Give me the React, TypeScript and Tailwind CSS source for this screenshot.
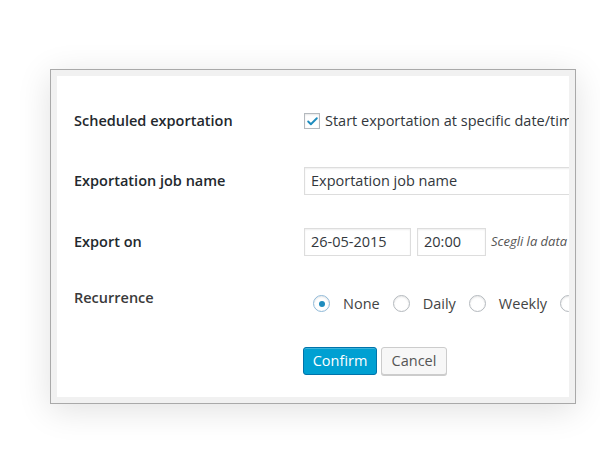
import { Check } from "lucide-react";

const font = { fontFamily: '"Open Sans", "Noto Sans", Arial, sans-serif' };

function Radio({ checked, label }: { checked?: boolean; label: string }) {
  return (
    <label className="flex items-center shrink-0">
      <span
        className={`w-[17px] h-[17px] rounded-full border bg-white flex items-center justify-center shadow-[inset_0_1px_2px_rgba(0,0,0,0.1)] ${
          checked ? "border-[#8fb9d8]" : "border-[#b4b9be]"
        }`}
      >
        {checked && <span className="w-[6px] h-[6px] rounded-full bg-[#1e8cbe]" />}
      </span>
      <span className="ml-[13px] mr-[13px] text-[14.5px] text-[#444]">{label}</span>
    </label>
  );
}

function Row({ label, children }: { label: string; children: React.ReactNode }) {
  return (
    <div className="flex items-center h-7">
      <div className="w-[230px] shrink-0 text-[14.5px] font-semibold text-[#23282d]">{label}</div>
      <div className="flex items-center flex-1 min-w-0 whitespace-nowrap">{children}</div>
    </div>
  );
}

export default function App() {
  return (
    <div className="w-[600px] h-[471px] bg-white overflow-hidden" style={font}>
      <div className="ml-[50px] mt-[69px] w-[526px] h-[335px] border border-[#a9a9a9] bg-[#f1f1f1] p-[6px] shadow-[0_6px_32px_rgba(0,0,0,0.12)]">
        <div className="w-full h-full bg-white overflow-hidden pl-[17px] pt-[31px]">
          <Row label="Scheduled exportation">
            <span className="w-4 h-4 border border-[#b4b9be] bg-white flex items-center justify-center shadow-[inset_0_1px_2px_rgba(0,0,0,0.1)] shrink-0">
              <Check size={13} strokeWidth={3.5} className="text-[#1e8cbe]" />
            </span>
            <span className="ml-[5px] text-[14.5px] text-[#32373c]">Start exportation at specific date/time</span>
          </Row>

          <div className="mt-[32px]">
            <Row label="Exportation job name">
              <div className="h-7 w-[300px] shrink-0 border border-[#ddd] shadow-[inset_0_1px_2px_rgba(0,0,0,0.07)] px-[6px] flex items-center text-[14.5px] text-[#32373c]">
                Exportation job name
              </div>
            </Row>
          </div>

          <div className="mt-[33px]">
            <Row label="Export on">
              <div className="h-7 w-[107px] shrink-0 border border-[#ddd] shadow-[inset_0_1px_2px_rgba(0,0,0,0.07)] px-[6px] flex items-center text-[14.5px] text-[#32373c]">
                26-05-2015
              </div>
              <div className="ml-[6px] h-7 w-[69px] shrink-0 border border-[#ddd] shadow-[inset_0_1px_2px_rgba(0,0,0,0.07)] px-[6px] flex items-center text-[14.5px] text-[#32373c]">
                20:00
              </div>
              <span className="ml-[5px] text-[13px] italic text-[#555]">Scegli la data e l'ora</span>
            </Row>
          </div>

          <div className="mt-[33px] flex h-7">
            <div className="w-[230px] shrink-0 text-[14.5px] font-semibold text-[#3a3a3a] leading-[18px]">Recurrence</div>
            <div className="flex items-center pl-[9px] pt-[1px] whitespace-nowrap">
              <Radio checked label="None" />
              <Radio label="Daily" />
              <Radio label="Weekly" />
              <Radio label="Monthly" />
            </div>
          </div>

          <div className="mt-[30px] flex ml-[229px]">
            <button className="h-7 w-[74px] rounded-[3px] border border-[#0073aa] bg-[#00a0d2] text-white text-[14.5px] shadow-[inset_0_1px_0_rgba(120,200,230,0.5)]">
              Confirm
            </button>
            <button className="ml-[4px] h-7 w-[66px] rounded-[3px] border border-[#ccc] bg-[#f7f7f7] text-[#555] text-[14.5px] shadow-[0_1px_0_#ccc]">
              Cancel
            </button>
          </div>
        </div>
      </div>
    </div>
  );
}
